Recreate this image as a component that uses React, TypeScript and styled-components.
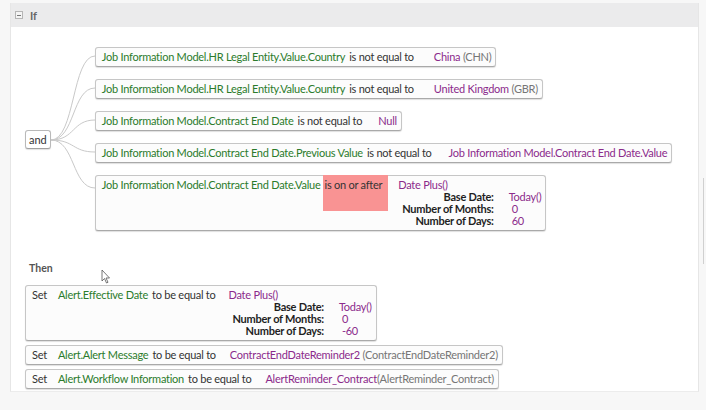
import styled, { createGlobalStyle } from 'styled-components'

const Global = createGlobalStyle`
  html, body {
    margin: 0;
    padding: 0;
    background: #f7f7f7;
  }
  body {
    font-family: Lato, "Liberation Sans", Arial, sans-serif;
    font-size: 11px;
    color: #333;
  }
`

const Page = styled.div`
  position: relative;
  width: 706px;
  height: 410px;
  padding: 3px 7px 0 10px;
  box-sizing: border-box;
`

const Panel = styled.div`
  background: #fff;
  border-left: 1px solid #e6e6e6;
  border-right: 1px solid #e6e6e6;
  border-bottom: 1px solid #ececec;
  height: 389px;
  box-sizing: border-box;
`

const Header = styled.div`
  height: 24px;
  background: #ebebec;
  display: flex;
  align-items: center;
  padding-left: 4px;
  gap: 7px;
  font-weight: bold;
  color: #666;
  font-size: 11px;
`

const Toggle = styled.span`
  width: 6px;
  height: 6px;
  border: 1px solid #b5b5b5;
  background: #f4f4f4;
  display: inline-flex;
  align-items: center;
  justify-content: center;
  &::after {
    content: '';
    width: 4px;
    height: 1px;
    background: #777;
  }
`

const Section = styled.div`
  padding: 20px 0 0 14px;
`

const Tree = styled.div`
  display: flex;
  align-items: center;
`

const Junction = styled.div`
  border: 1px solid #b9b9b9;
  border-bottom-color: #a0a0a0;
  border-radius: 3px;
  background: #fff;
  box-shadow: 0 1px 1px rgba(0, 0, 0, 0.12);
  height: 17px;
  line-height: 17px;
  padding: 0 3px;
  font-size: 11px;
  color: #333;
`

const Links = styled.svg`
  width: 44px;
  height: 183px;
  flex: none;
`

const Column = styled.div<{ $gap: number }>`
  display: flex;
  flex-direction: column;
  align-items: flex-start;
  gap: ${(p) => p.$gap}px;
`

const Box = styled.div`
  display: flex;
  align-items: flex-start;
  border: 1px solid #c6c6c6;
  border-bottom-color: #a9a9a9;
  border-radius: 3px;
  background: #fcfcfc;
  box-shadow: 0 1px 1px rgba(0, 0, 0, 0.13);
  padding: 3px 4px 3px 6px;
  line-height: 12px;
  letter-spacing: -0.25px;
  white-space: nowrap;
`

const Keyword = styled.span`
  color: #333;
  margin-right: 11px;
`

const Field = styled.span`
  color: #2b7b2b;
  margin-right: 2px;
`

const Operator = styled.span<{ $hit?: boolean }>`
  color: #333;
  padding: 0 6px 0 2px;
  ${(p) =>
    p.$hit &&
    `
    background: #f99393;
    margin-top: -4px;
    padding-top: 4px;
    padding-bottom: 20px;
  `}
`

const Value = styled.div<{ $indent: number }>`
  margin-left: ${(p) => p.$indent}px;
  display: flex;
  flex-direction: column;
`

const Purple = styled.span`
  color: #8b2a8b;
`

const Muted = styled.span`
  color: #767676;
`

const Args = styled.div`
  display: grid;
  grid-template-columns: auto auto;
  column-gap: 15px;
  padding-left: 4px;
`

const ArgLabel = styled.span`
  text-align: right;
  font-weight: bold;
  color: #1f1f1f;
`

const ArgValue = styled.span<{ $shift?: number }>`
  color: #8b2a8b;
  padding-left: ${(p) => p.$shift ?? 0}px;
`

const ThenTitle = styled.div`
  font-weight: bold;
  color: #555;
  font-size: 10.5px;
  line-height: 12px;
  margin: 31px 0 11px 4px;
`

const Scroll = styled.div`
  position: absolute;
  left: 703px;
  top: 178px;
  width: 2px;
  height: 86px;
  border-left: 1px solid #d0d0d0;
`

const Cursor = styled.svg`
  position: absolute;
  left: 101px;
  top: 269px;
  width: 10px;
  height: 15px;
`

type Arg = { label: string; value: string; shift?: number }

const DatePlus = ({ args }: { args: Arg[] }) => (
  <>
    <Purple>Date Plus()</Purple>
    <Args>
      {args.map((a) => [
        <ArgLabel key={a.label}>{a.label}</ArgLabel>,
        <ArgValue key={a.label + 'v'} $shift={a.shift}>
          {a.value}
        </ArgValue>,
      ])}
    </Args>
  </>
)

const ends = [8, 40, 72, 104, 140]

export default function App() {
  return (
    <Page>
      <Global />
      <Panel>
        <Header>
          <Toggle />
          If
        </Header>
        <Section>
          <Tree>
            <Junction>and</Junction>
            <Links viewBox="0 0 44 183">
              {ends.map((y) => (
                <path
                  key={y}
                  d={`M0 92 C 24 92, 21 ${y}, 44 ${y}`}
                  fill="none"
                  stroke="#c9c9c9"
                  strokeWidth="1"
                />
              ))}
            </Links>
            <Column $gap={12}>
              <Box>
                <Field>Job Information Model.HR Legal Entity.Value.Country</Field>
                <Operator>is not equal to</Operator>
                <Value $indent={14}>
                  <span>
                    <Purple>China</Purple> <Muted>(CHN)</Muted>
                  </span>
                </Value>
              </Box>
              <Box>
                <Field>Job Information Model.HR Legal Entity.Value.Country</Field>
                <Operator>is not equal to</Operator>
                <Value $indent={14}>
                  <span>
                    <Purple>United Kingdom</Purple> <Muted>(GBR)</Muted>
                  </span>
                </Value>
              </Box>
              <Box>
                <Field>Job Information Model.Contract End Date</Field>
                <Operator>is not equal to</Operator>
                <Value $indent={10}>
                  <Purple>Null</Purple>
                </Value>
              </Box>
              <Box>
                <Field>Job Information Model.Contract End Date.Previous Value</Field>
                <Operator>is not equal to</Operator>
                <Value $indent={11}>
                  <Purple>Job Information Model.Contract End Date.Value</Purple>
                </Value>
              </Box>
              <Box>
                <Field>Job Information Model.Contract End Date.Value</Field>
                <Operator $hit>is on or after</Operator>
                <Value $indent={10}>
                  <DatePlus
                    args={[
                      { label: 'Base Date:', value: 'Today()' },
                      { label: 'Number of Months:', value: '0', shift: 3 },
                      { label: 'Number of Days:', value: '60', shift: 3 },
                    ]}
                  />
                </Value>
              </Box>
            </Column>
          </Tree>
          <ThenTitle>Then</ThenTitle>
          <Column $gap={4}>
            <Box>
              <Keyword>Set</Keyword>
              <Field>Alert.Effective Date</Field>
              <Operator>to be equal to</Operator>
              <Value $indent={7}>
                <DatePlus
                  args={[
                    { label: 'Base Date:', value: 'Today()' },
                    { label: 'Number of Months:', value: '0', shift: 3 },
                    { label: 'Number of Days:', value: '-60', shift: 3 },
                  ]}
                />
              </Value>
            </Box>
            <Box>
              <Keyword>Set</Keyword>
              <Field>Alert.Alert Message</Field>
              <Operator>to be equal to</Operator>
              <Value $indent={8}>
                <span>
                  <Purple>ContractEndDateReminder2</Purple>{' '}
                  <Muted>(ContractEndDateReminder2)</Muted>
                </span>
              </Value>
            </Box>
            <Box>
              <Keyword>Set</Keyword>
              <Field>Alert.Workflow Information</Field>
              <Operator>to be equal to</Operator>
              <Value $indent={8}>
                <span>
                  <Purple>AlertReminder_Contract</Purple>
                  <Muted>(AlertReminder_Contract)</Muted>
                </span>
              </Value>
            </Box>
          </Column>
        </Section>
      </Panel>
      <Scroll />
      <Cursor viewBox="0 0 10 15">
        <path
          d="M1 1 L1 12 L3.5 9.5 L5.5 14 L7 13.3 L5 9 L8.5 9 Z"
          fill="#fff"
          stroke="#555"
          strokeWidth="0.8"
        />
      </Cursor>
    </Page>
  )
}
